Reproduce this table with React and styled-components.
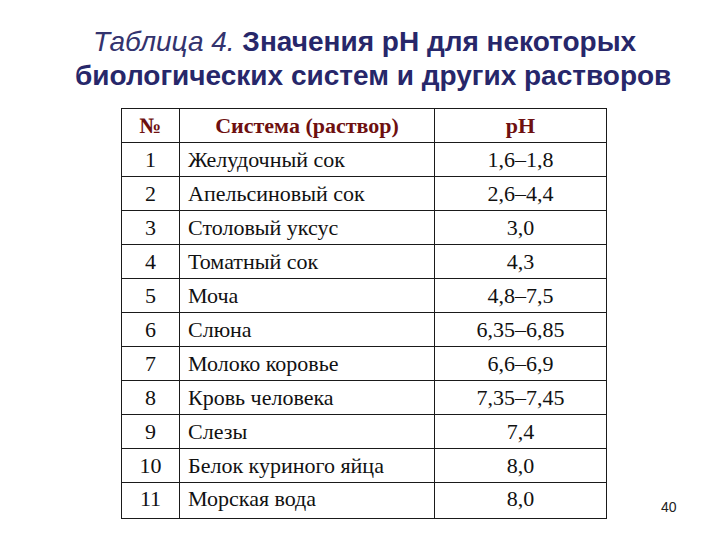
import React from 'react';
import styled, { createGlobalStyle } from 'styled-components';

const GlobalStyle = createGlobalStyle`
  html, body {
    margin: 0;
    padding: 0;
    background: #fff;
  }
`;

const rows = [
  ['1', 'Желудочный сок', '1,6–1,8'],
  ['2', 'Апельсиновый сок', '2,6–4,4'],
  ['3', 'Столовый уксус', '3,0'],
  ['4', 'Томатный сок', '4,3'],
  ['5', 'Моча', '4,8–7,5'],
  ['6', 'Слюна', '6,35–6,85'],
  ['7', 'Молоко коровье', '6,6–6,9'],
  ['8', 'Кровь человека', '7,35–7,45'],
  ['9', 'Слезы', '7,4'],
  ['10', 'Белок куриного яйца', '8,0'],
  ['11', 'Морская вода', '8,0'],
];

const App = () => {
  return (
    <>
      <GlobalStyle />
      <Slide>
        <Title>
          <TitleLine $indent={18}>
            <Caption>Таблица 4.</Caption> Значения рН для некоторых
          </TitleLine>
          <TitleLine>биологических систем и других растворов</TitleLine>
        </Title>
        <Bottom>
          <Table>
            <thead>
              <tr>
                <HeadCell>№</HeadCell>
                <HeadCell>Система (раствор)</HeadCell>
                <HeadCell>pH</HeadCell>
              </tr>
            </thead>
            <tbody>
              {rows.map(([n, name, ph], i) => (
                <Row key={n} $last={i === rows.length - 1}>
                  <Cell $align="center">{n}</Cell>
                  <Cell $align="left">{name}</Cell>
                  <Cell $align="center">{ph}</Cell>
                </Row>
              ))}
            </tbody>
          </Table>
          <PageNum>40</PageNum>
        </Bottom>
      </Slide>
    </>
  );
};

const serif = `'Liberation Serif', 'Times New Roman', serif`;

const Slide = styled.div`
  width: 720px;
  height: 540px;
  box-sizing: border-box;
  padding: 25px 0 0 75px;
  display: flex;
  flex-direction: column;
`;

const Title = styled.h1`
  margin: 0;
  font-family: 'Liberation Sans', Arial, sans-serif;
  font-weight: bold;
  font-size: 28px;
  line-height: 34px;
  color: #27276a;
`;

const TitleLine = styled.div`
  padding-left: ${p => p.$indent || 0}px;
  white-space: nowrap;
`;

const Caption = styled.span`
  font-style: italic;
  font-weight: normal;
  color: #33336e;
`;

const Bottom = styled.div`
  display: flex;
  align-items: flex-end;
  margin-top: 15px;
  padding-left: 46px;
`;

const Table = styled.table`
  border-collapse: collapse;
  width: 486px;
  table-layout: fixed;
  font-family: ${serif};
  font-size: 22px;
  color: #111;

  td, th {
    border: 1px solid #1a1a1a;
    padding: 0;
    font-family: ${serif};
    font-size: 22px;
  }
`;

const HeadCell = styled.th`
  height: 33px;
  font-weight: bold;
  color: #6e1010;
  text-align: center;
  &:nth-child(1) { width: 57px; }
  &:nth-child(2) { width: 254px; }
`;

const Row = styled.tr`
  height: ${p => (p.$last ? '36px' : '34px')};
  td {
    vertical-align: ${p => (p.$last ? 'top' : 'middle')};
    padding-top: ${p => (p.$last ? '3px' : '0')};
  }
`;

const Cell = styled.td`
  font-weight: normal;
  text-align: ${p => p.$align};
  padding-left: ${p => (p.$align === 'left' ? '8px' : '0')} !important;
  white-space: nowrap;
`;

const PageNum = styled.div`
  margin-left: 54px;
  margin-bottom: 4px;
  font-family: 'Liberation Sans', Arial, sans-serif;
  font-size: 14px;
  color: #222;
`;

export default App;
